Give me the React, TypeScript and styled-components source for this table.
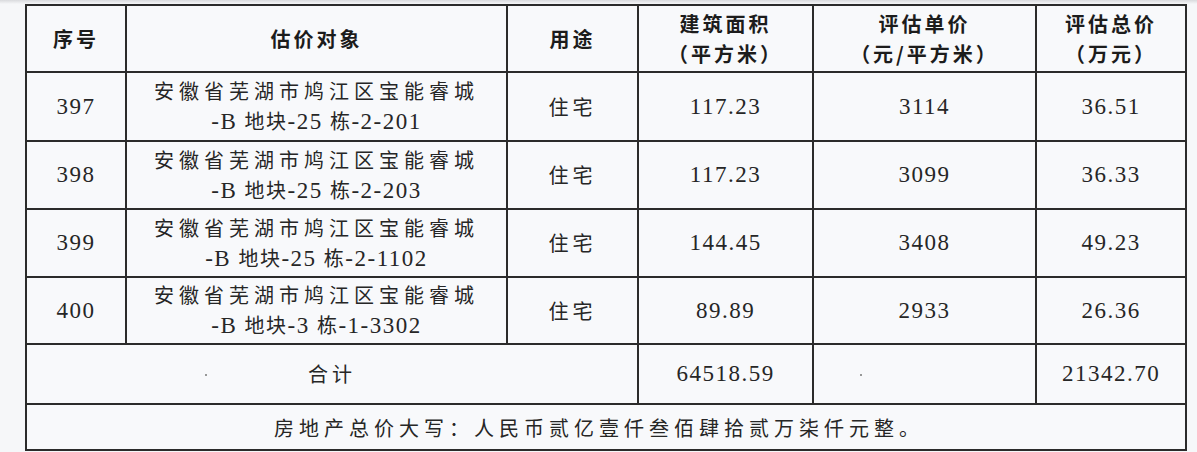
import React from "react";
import styled, { createGlobalStyle } from "styled-components";

const GlobalStyle = createGlobalStyle`
  html, body {
    margin: 0;
    padding: 0;
    background: #f6f7f9;
  }
  body {
    width: 1197px;
    height: 452px;
    overflow: hidden;
    font-family: "Noto Sans CJK SC", sans-serif;
    color: #262626;
  }
`;

const Page = styled.div`
  padding: 4px 0 0 25px;
  background: linear-gradient(#d9dadd 0, #f6f7f9 4px);
`;

const Table = styled.table`
  border-collapse: collapse;
  table-layout: fixed;
  width: 1160px;
  background: #f8f9fb;

  td,
  th {
    border: 2px solid #2b2b2b;
    padding: 0;
    text-align: center;
    vertical-align: middle;
  }
`;

const Row = styled.tr<{ $h: number }>`
  height: ${p => p.$h}px;
`;

const Head = styled.th`
  font-family: "Noto Sans CJK SC", sans-serif;
  font-weight: 700;
  font-size: 20px;
  line-height: 30px;
  letter-spacing: 3px;
  color: #1c1c1c;
`;

const Cell = styled.td<{ $num?: boolean }>`
  position: relative;
  font-family: ${p =>
    p.$num ? `"Liberation Serif", "Times New Roman", serif` : `"Noto Sans CJK SC", sans-serif`};
  font-size: ${p => (p.$num ? 23 : 20)}px;
  letter-spacing: ${p => (p.$num ? 1.5 : 4)}px;
  line-height: 30px;
  font-weight: 400;
`;

const Line = styled.div<{ $wide?: boolean }>`
  letter-spacing: ${p => (p.$wide ? 5 : 1.5)}px;
`;

const Latin = styled.span`
  font-family: "Liberation Serif", "Times New Roman", serif;
  font-size: 23px;
`;

const Speck = styled.span<{ $left: number }>`
  position: absolute;
  left: ${p => p.$left}px;
  top: 29px;
  width: 2px;
  height: 2px;
  border-radius: 50%;
  background: #777;
`;

const Footer = styled.td`
  font-size: 20px;
  letter-spacing: 5px;
  padding-right: 14px !important;
`;

type Item = {
  no: string;
  unit: string;
  area: string;
  price: string;
  total: string;
};

const rows: Item[] = [
  { no: "397", unit: "-25 栋-2-201", area: "117.23", price: "3114", total: "36.51" },
  { no: "398", unit: "-25 栋-2-203", area: "117.23", price: "3099", total: "36.33" },
  { no: "399", unit: "-25 栋-2-1102", area: "144.45", price: "3408", total: "49.23" },
  { no: "400", unit: "-3 栋-1-3302", area: "89.89", price: "2933", total: "26.36" },
];

// "-25 栋-2-201" -> latin parts in serif font, 汉字 in CJK font
const UnitText: React.FC<{ text: string }> = ({ text }) => (
  <>
    {text.split(/([\u4e00-\u9fa5]+)/).map((part, i) =>
      /[\u4e00-\u9fa5]/.test(part) ? <span key={i}>{part}</span> : <Latin key={i}>{part}</Latin>
    )}
  </>
);

const App: React.FC = () => {
  return (
    <>
      <GlobalStyle />
      <Page>
        <Table>
          <colgroup>
            <col style={{ width: 100 }} />
            <col style={{ width: 381 }} />
            <col style={{ width: 131 }} />
            <col style={{ width: 175 }} />
            <col style={{ width: 223 }} />
            <col style={{ width: 150 }} />
          </colgroup>
          <thead>
            <Row $h={67}>
              <Head>序号</Head>
              <Head>估价对象</Head>
              <Head>用途</Head>
              <Head>
                建筑面积
                <br />
                （平方米）
              </Head>
              <Head>
                评估单价
                <br />
                （元/平方米）
              </Head>
              <Head>
                评估总价
                <br />
                （万元）
              </Head>
            </Row>
          </thead>
          <tbody>
            {rows.map((r, i) => (
              <Row $h={i === 0 ? 69 : i === 3 ? 67 : 68} key={r.no}>
                <Cell $num>{r.no}</Cell>
                <Cell>
                  <Line $wide>安徽省芜湖市鸠江区宝能睿城</Line>
                  <Line>
                    <Latin>-B </Latin>地块<UnitText text={r.unit} />
                  </Line>
                </Cell>
                <Cell>住宅</Cell>
                <Cell $num>{r.area}</Cell>
                <Cell $num>{r.price}</Cell>
                <Cell $num>{r.total}</Cell>
              </Row>
            ))}
            <Row $h={60}>
              <Cell colSpan={3}>
                <Speck $left={178} />
                合计
              </Cell>
              <Cell $num>64518.59</Cell>
              <Cell $num>
                <Speck $left={46} />
              </Cell>
              <Cell $num>21342.70</Cell>
            </Row>
            <Row $h={46}>
              <Footer colSpan={6}>房地产总价大写：人民币贰亿壹仟叁佰肆拾贰万柒仟元整。</Footer>
            </Row>
          </tbody>
        </Table>
      </Page>
    </>
  );
};

export default App;
